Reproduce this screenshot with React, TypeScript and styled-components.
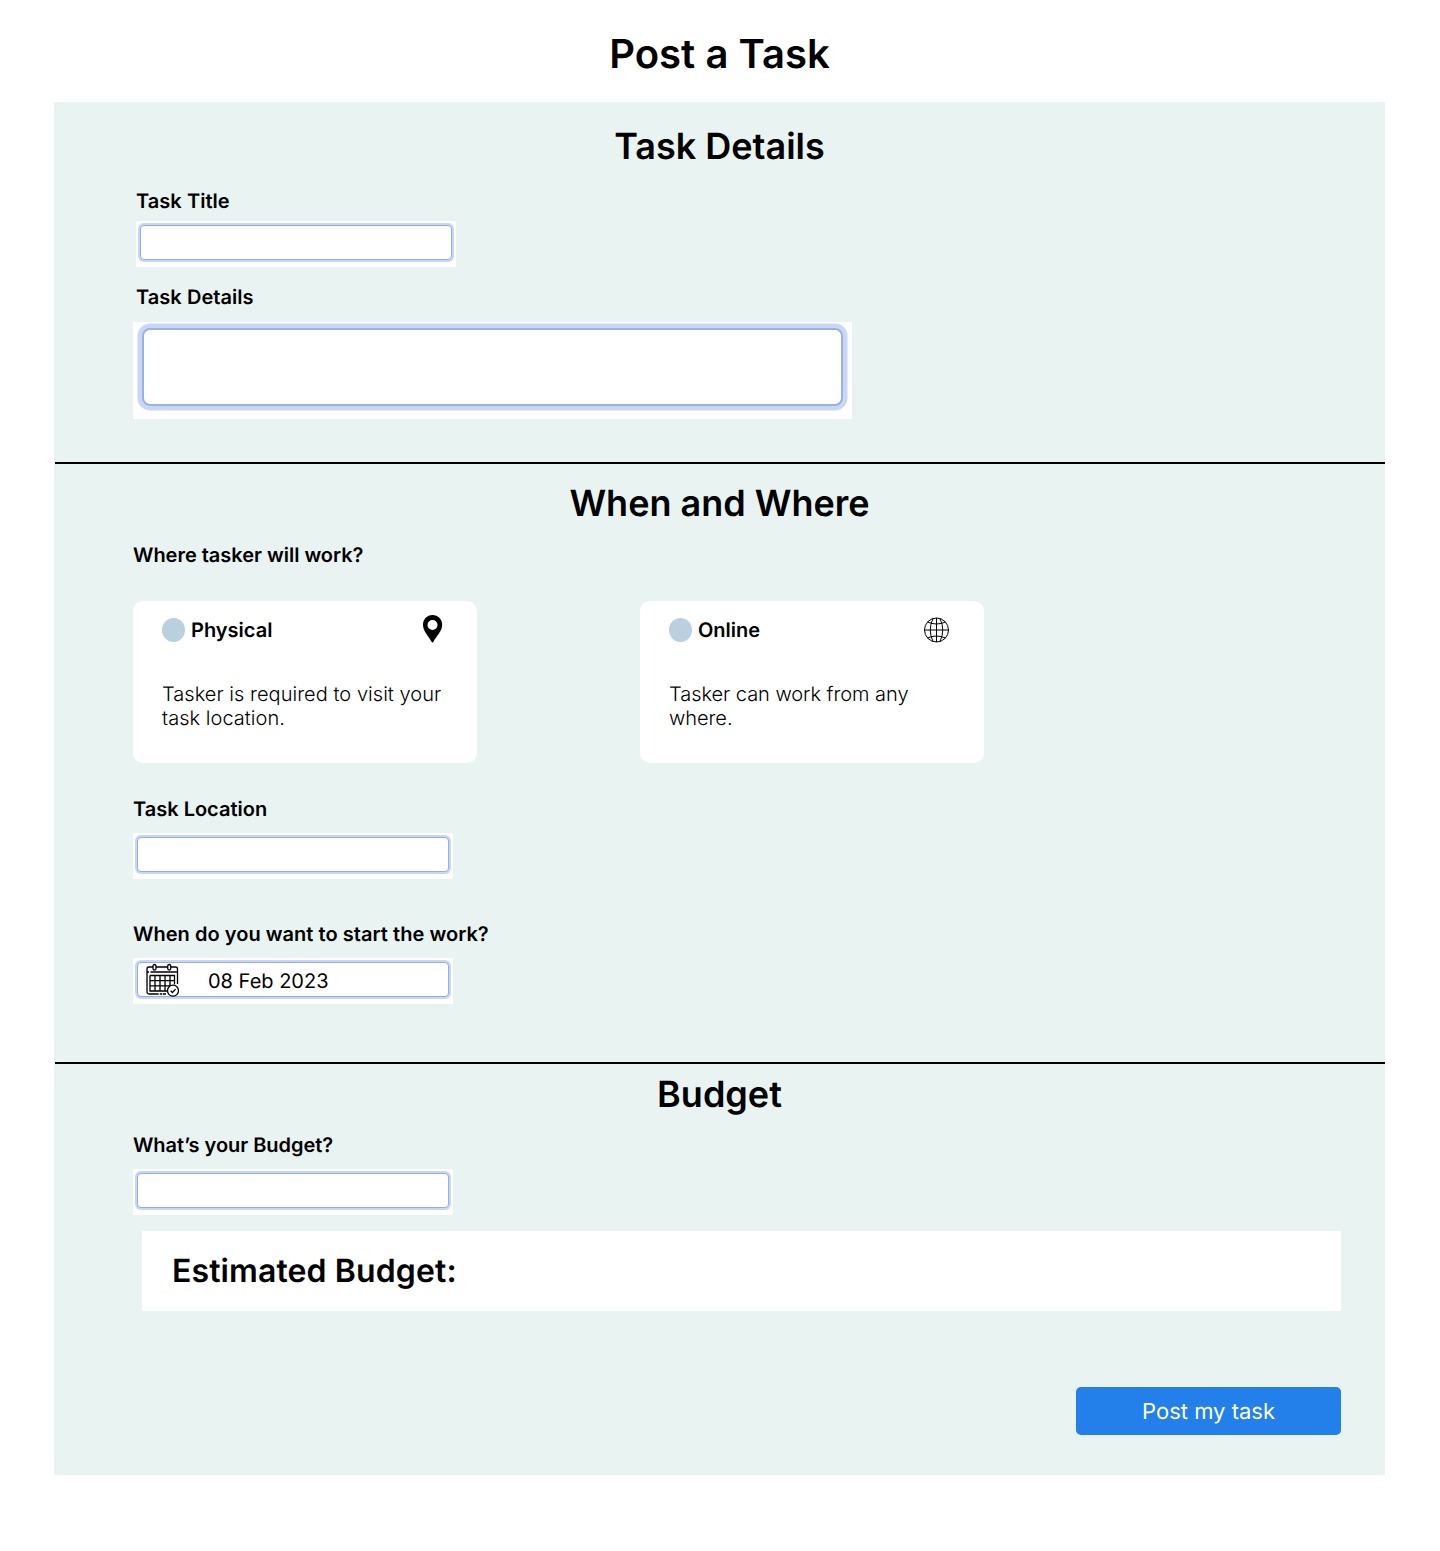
import React from "react";
import styled, { createGlobalStyle } from "styled-components";

const GlobalStyle = createGlobalStyle`
  *, *::before, *::after { box-sizing: border-box; }
  body {
    margin: 0;
    background: #fff;
    color: #000;
    font-family: Inter, "Liberation Sans", sans-serif;
    text-rendering: geometricPrecision;
  }
`;

const Page = styled.main`
  width: 1440px;
  height: 1551px;
  padding: 30px 55px 0 54px;
`;

const PageTitle = styled.h1`
  margin: 0 0 24px;
  font-size: 40px;
  line-height: 48px;
  font-weight: 600;
  letter-spacing: 0.04px;
  text-align: center;
`;

const Panel = styled.form`
  display: flex;
  flex-direction: column;
  height: 1373px;
  background: #e9f3f1;
`;

const Divider = styled.hr`
  flex: none;
  width: 1330px;
  height: 2px;
  margin: 0 0 0 1px;
  border: 0;
  background: #000;
`;

const Section = styled.section<{ $height: number; $top: number }>`
  display: flex;
  flex-direction: column;
  align-items: flex-start;
  height: ${(p) => p.$height}px;
  padding: ${(p) => p.$top}px 44px 0 79px;
`;

const SectionTitle = styled.h2<{ $gap: number }>`
  align-self: stretch;
  margin: 0 -44px ${(p) => p.$gap}px -79px;
  font-size: 36px;
  line-height: 44px;
  font-weight: 600;
  text-align: center;
`;

const Label = styled.label<{ $gap?: number; $indent?: number; $tracking?: number }>`
  margin: 0 0 ${(p) => p.$gap ?? 12}px ${(p) => p.$indent ?? 0}px;
  font-size: 20px;
  line-height: 24px;
  font-weight: 600;
  letter-spacing: ${(p) => p.$tracking ?? 0}px;
`;

const FieldFrame = styled.div<{ $gap?: number; $indent?: number }>`
  width: 320px;
  height: 46px;
  margin: 0 0 ${(p) => p.$gap ?? 0}px ${(p) => p.$indent ?? 0}px;
  padding: 4px 4px 7px;
  background: #fff;
`;

const FieldBox = styled.div`
  display: flex;
  align-items: center;
  height: 35px;
  border: 1px solid #92aee4;
  border-radius: 4px;
  box-shadow: 0 0 0 2px #c8d7f8;
  background: #fff;
`;

const TextInput = styled.input`
  flex: 1;
  min-width: 0;
  height: 100%;
  padding: 0 10px;
  border: 0;
  outline: 0;
  background: transparent;
  font: 400 20px/24px Inter, sans-serif;
`;

const DateValue = styled.span`
  margin: 3px 0 0 28px;
  font-size: 20px;
  line-height: 24px;
`;

const AreaFrame = styled.div`
  width: 719px;
  height: 97px;
  padding: 6px 9px 13px;
  background: #fff;
`;

const TextArea = styled.textarea`
  display: block;
  width: 701px;
  height: 78px;
  padding: 10px;
  border: 2px solid #9cb0e2;
  border-radius: 8px;
  outline: 0;
  box-shadow: 0 0 0 4.5px #c8d7f8;
  resize: none;
  font: 400 20px/24px Inter, sans-serif;
`;

const Choices = styled.div`
  display: flex;
  gap: 163px;
  margin-bottom: 34px;
`;

const Card = styled.div`
  width: 344px;
  height: 162px;
  padding: 14px 29px 0;
  border-radius: 10px;
  background: #fff;
`;

const CardHead = styled.div`
  display: flex;
  align-items: center;
  height: 30px;
  margin-right: 5px;
  font-size: 20px;
  line-height: 24px;
  font-weight: 600;

  svg { margin-left: auto; }
`;

const Dot = styled.span`
  width: 23px;
  height: 24px;
  margin-right: 6px;
  border-radius: 50%;
  background: #bad0df;
`;

const CardText = styled.p<{ $tracking: number }>`
  margin: 37px -6px 0 0;
  font-size: 20px;
  line-height: 24px;
  font-weight: 300;
  letter-spacing: ${(p) => p.$tracking}px;
`;

const Estimate = styled.div`
  display: flex;
  align-items: center;
  width: 1199px;
  height: 80px;
  margin: 0 0 76px 9px;
  padding: 0 30px 1px;
  background: #fff;
  font-size: 32px;
  font-weight: 600;
  letter-spacing: 0.11px;
`;

const Submit = styled.button`
  align-self: flex-end;
  width: 265px;
  height: 48px;
  padding: 1px 0 0;
  border: 0;
  border-radius: 5px;
  background: #2380ea;
  color: #fff;
  font: 400 22px/28px Inter, sans-serif;
  text-rendering: inherit;
`;

const PinIcon = () => (
  <svg width="20" height="30" viewBox="0 0 20 30">
    <path
      fillRule="evenodd"
      d="M9.500 0C4 0 0 4.300 0 9.800C0 16 5 20.500 8.900 27.200Q9.500 28 10.100 27.200C14 20.500 19.200 16 19.200 9.800C19.200 4.300 15 0 9.500 0ZM9.500 5a5 5 0 1 1 0 10a5 5 0 0 1 0-10Z"
    />
  </svg>
);

const GlobeIcon = () => (
  <svg width="26" height="26" viewBox="0 0 26 26" fill="none" stroke="#000" strokeWidth="1">
    <circle cx="12.500" cy="13" r="12" />
    <path d="M12.500 1v24M.5 13h24M9 1.500Q3.500 13 9 24.500M16 1.500Q21.500 13 16 24.500M3.500 5Q12.500 9 21.500 5M3.500 21Q12.500 17 21.500 21" />
  </svg>
);

const CalendarIcon = () => (
  <svg width="34" height="34" viewBox="0 0 34 34" fill="none" stroke="#000" strokeWidth="1.300">
    <path d="M20 31H3a2 2 0 0 1-2-2V6a2 2 0 0 1 2-2H7M10 4H21.500M25 4H29.500a2 2 0 0 1 2 2V21" />
    <path d="M1 9H3M4.500 9H31.500" />
    <rect x="7" y="1.500" width="3" height="5.500" rx="1.500" fill="#fff" />
    <rect x="21.700" y="1.500" width="3" height="5.500" rx="1.500" fill="#fff" />
    <path d="M4 12.500H28.500V21.500M4 12.500V28H21M4 17.700H28.500M4 22.900H24M9 12.500V28M14 12.500V28M19 12.500V28M24 12.500V22.500" />
    <path d="M12.500 31h1.500M16 31h1" stroke="#fff" strokeWidth="1.500" />
    <circle cx="27" cy="27.700" r="5.500" fill="#fff" />
    <path d="m24.600 27.700 1.800 1.800 3.200-3.400" />
  </svg>
);

const CalendarSlot = styled.span`
  display: flex;
  margin-left: 8px;
`;

export default function App() {
  return (
    <>
      <GlobalStyle />
      <Page>
        <PageTitle>Post a Task</PageTitle>
        <Panel onSubmit={(e) => e.preventDefault()}>
          <Section $height={360} $top={22}>
            <SectionTitle $gap={21}>Task Details</SectionTitle>
            <Label htmlFor="title" $gap={8} $indent={3} $tracking={0.05}>Task Title</Label>
            <FieldFrame $gap={18} $indent={3}>
              <FieldBox><TextInput id="title" /></FieldBox>
            </FieldFrame>
            <Label htmlFor="details" $gap={13} $indent={3} $tracking={0.05}>Task Details</Label>
            <AreaFrame><TextArea id="details" /></AreaFrame>
          </Section>
          <Divider />
          <Section $height={598} $top={17}>
            <SectionTitle $gap={18}>When and Where</SectionTitle>
            <Label as="span" $gap={34} $tracking={-0.02}>Where tasker will work?</Label>
            <Choices>
              <Card>
                <CardHead><Dot />Physical<PinIcon /></CardHead>
                <CardText $tracking={0.04}>Tasker is required to visit your<br />task location.</CardText>
              </Card>
              <Card>
                <CardHead><Dot />Online<GlobeIcon /></CardHead>
                <CardText $tracking={-0.04}>Tasker can work from any<br />where.</CardText>
              </Card>
            </Choices>
            <Label htmlFor="location">Task Location</Label>
            <FieldFrame $gap={43}>
              <FieldBox><TextInput id="location" /></FieldBox>
            </FieldFrame>
            <Label as="span" $tracking={0.04}>When do you want to start the work?</Label>
            <FieldFrame>
              <FieldBox>
                <CalendarSlot><CalendarIcon /></CalendarSlot>
                <DateValue>08 Feb 2023</DateValue>
              </FieldBox>
            </FieldFrame>
          </Section>
          <Divider />
          <Section $height={411} $top={8}>
            <SectionTitle $gap={17}>Budget</SectionTitle>
            <Label htmlFor="budget" $tracking={-0.04}>What’s your Budget?</Label>
            <FieldFrame $gap={16}>
              <FieldBox><TextInput id="budget" /></FieldBox>
            </FieldFrame>
            <Estimate>Estimated Budget:</Estimate>
            <Submit type="submit">Post my task</Submit>
          </Section>
        </Panel>
      </Page>
    </>
  );
}
